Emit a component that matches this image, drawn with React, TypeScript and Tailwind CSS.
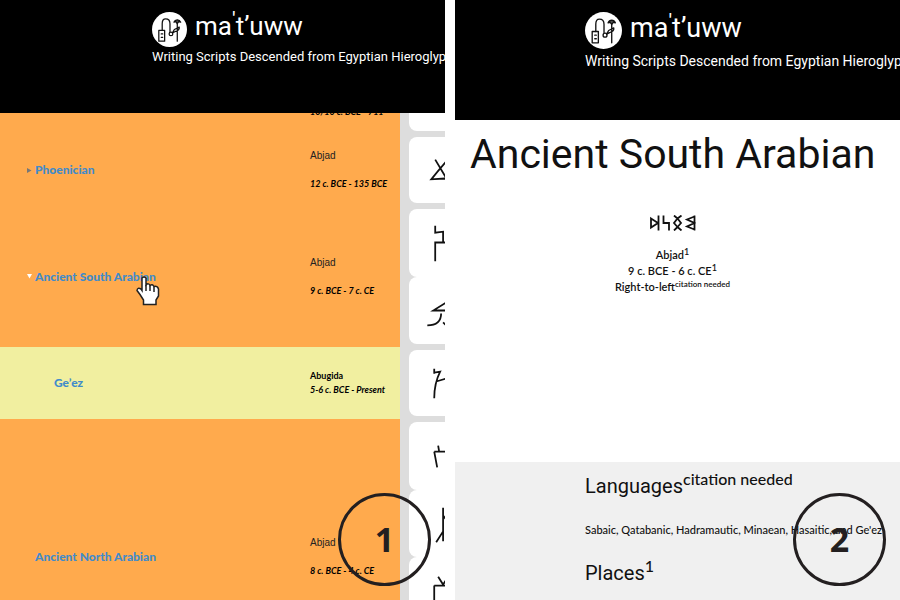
import React from "react";

type Script = {
  name: string;
  kind: string;
  dates: string;
  marker?: "closed" | "open";
  nested?: boolean;
  glyphs: string[];
  height: string;
};

const scripts: Script[] = [
  { name: "", kind: "", dates: "10/10 c. BCE - 711", glyphs: [""], height: "h-[72px]" },
  {
    name: "Phoenician",
    kind: "Abjad",
    dates: "12 c. BCE - 135 BCE",
    marker: "closed",
    glyphs: ["M26 23 L38 43 M37 25 Q29 34 22 43 L38 42"],
    height: "h-[72px]",
  },
  {
    name: "Ancient South Arabian",
    kind: "Abjad",
    dates: "9 c. BCE - 7 c. CE",
    marker: "open",
    glyphs: ["M26 17 V24 L34 23 V33 M26 34 H38 M26 33 V53", "M37 26 L24 34 L38 34 M32 37 Q32 49 18 49 M34 46 L38 50"],
    height: "h-[141px]",
  },
  {
    name: "Ge’ez",
    kind: "Abugida",
    dates: "5-6 c. BCE - Present",
    nested: true,
    glyphs: ["M25 19 V24 M25 23 L31 22 Q25 34 25 49 M27 32 L37 29"],
    height: "h-[72px]",
  },
  {
    name: "Ancient North Arabian",
    kind: "Abjad",
    dates: "8 c. BCE - 4 c. CE",
    glyphs: [
      "M29 24 L30 30 M25 30 H38 M25 30 L28 46",
      "M34 18 V52 M34 26 L38 31 M34 42 L27 53",
      "M29 20 L34 28 L38 22 M25 29 H38 M25 29 V50",
      "",
    ],
    height: "h-[276px]",
  },
];

function Logo({ className }: { className: string }) {
  return (
    <svg viewBox="0 0 36 36" className={className} role="img" aria-label="Logo">
      <circle cx="18" cy="18" r="18" fill="#fff" />
      <g fill="none" stroke="#111" strokeWidth="1.3" strokeLinecap="round" strokeLinejoin="round">
        <rect x="7" y="19" width="6" height="11" />
        <path d="M10.500 19 V12 Q10.500 7 14 7 Q18.500 7 18.500 12 V20" />
        <circle cx="19.500" cy="22.500" r="1.900" />
        <path d="M9.500 22.500 H11 M9.500 26 H11" />
        <path d="M21 21.500 L23 18 L28 15.500 Q28.500 19 24 20 L21 21.500 M26 11 V30" />
        <path d="M22.500 10.500 Q23.500 8 26 8 Q28.500 8 29.500 10.500 L27.500 10 L26 12 L24.500 10 Z" fill="#555" />
      </g>
    </svg>
  );
}

function Header({ large }: { large?: boolean }) {
  return (
    <header
      className={
        large
          ? "h-[120px] shrink-0 bg-black pt-3 pl-[130px] text-white"
          : "h-[113px] shrink-0 bg-black pt-3 pl-[152px] text-white"
      }
    >
      <div className="flex items-start gap-2">
        <Logo className={large ? "size-[37px] shrink-0" : "size-[35px] shrink-0"} />
        <p className={large ? "text-[27px] leading-8" : "text-[26px] leading-7"}>
          ma<sup className="-top-[9px] text-[21px] leading-none">'</sup>tʼuww
        </p>
      </div>
      <p
        className={
          large
            ? "mt-[2px] text-[14px] leading-5 whitespace-nowrap"
            : "text-[13px] leading-5 whitespace-nowrap"
        }
      >
        Writing Scripts Descended from Egyptian Hieroglyphs
      </p>
    </header>
  );
}

function Marker({ state }: { state: "closed" | "open" }) {
  return (
    <button
      type="button"
      aria-expanded={state === "open"}
      aria-label="Toggle descendants"
      className="block w-2 shrink-0"
    >
      <svg viewBox="0 0 5 5" className="size-[5px]">
        {state === "open" ? (
          <path d="M0 0 H5 L2.500 4.500 Z" fill="#fff" />
        ) : (
          <path d="M0 0 L4.500 2.500 L0 5 Z" fill="#777" />
        )}
      </svg>
    </button>
  );
}

function ScriptRow({ script }: { script: Script }) {
  return (
    <tr className={script.nested ? "bg-[#f1efa0]" : "bg-[#ffaa4d]"}>
      <td className={`p-0 align-middle ${script.height}`}>
        <div className={script.nested ? "flex items-center pl-[54px]" : "flex items-center pl-[27px]"}>
          {script.marker ? <Marker state={script.marker} /> : !script.nested && <span className="w-2" />}
          <a href="#" className="text-[12px] leading-4 font-black text-[#428bca]">
            {script.name}
          </a>
        </div>
      </td>
      <td className="p-0 align-middle text-[9px] leading-[14px] text-black">
        <div className={script.nested ? "" : "flex flex-col gap-[14px]"}>
          <p className={script.nested ? "h-[14px] font-bold" : "h-[14px] font-['Liberation_Sans',sans-serif] text-[10px] text-[#222]"}>
            {script.kind}
          </p>
          <p className="font-bold whitespace-nowrap italic">{script.dates}</p>
        </div>
      </td>
      <td className="h-px bg-[#ddd] p-0">
        <div className="flex h-full flex-col py-[3px] pl-[9px]">
          {script.glyphs.map((d, i) => (
            <div key={i} className="w-20 flex-1 rounded-lg bg-white">
              <svg viewBox="0 0 80 67" className="h-[66px] w-20">
                <path d={d} fill="none" stroke="#111" strokeWidth="1.800" />
              </svg>
            </div>
          ))}
        </div>
      </td>
    </tr>
  );
}

function StepBadge({ step }: { step: number }) {
  return (
    <div className="absolute right-[14px] bottom-[14px] flex size-[93px] items-center justify-center rounded-full border-[3px] border-[#231f20] font-['Open_Sans',sans-serif] text-[34px] font-bold text-[#231f20]">
      {step}
    </div>
  );
}

function HandCursor() {
  return (
    <svg
      viewBox="0 0 24 30"
      className="pointer-events-none absolute top-[276px] left-[136px] h-[30px] w-6"
      aria-hidden="true"
    >
      <path
        d="M6 2 Q8 0 10 2 V9 Q12.500 6.500 14 9.500 Q16.500 7.500 18 10.500 Q21.500 9.500 22.500 13 V20 L20 24 V28.500 H7.500 V24 L4 18.500 L1 14.500 Q1.500 11 5 13 L6 14.500 Z"
        fill="#fff"
        stroke="#222"
        strokeWidth="1.500"
      />
      <path d="M10 9 V15 M14 9.500 V15 M18 10.500 V16" stroke="#222" strokeWidth="1.500" />
    </svg>
  );
}

function Inscription() {
  return (
    <svg
      viewBox="0 0 46 16"
      className="h-4 w-[46px]"
      fill="none"
      stroke="#111"
      strokeWidth="1.800"
      role="img"
      aria-label="Musnad"
    >
      <path d="M1 3.500 L8 8 L1 12.500 Z M8.500 0.500 V15.500" />
      <path d="M13.500 0.500 V8 H19 V15.500" />
      <path d="M24 0.500 L27.500 3.500 L31.500 0.500 M27.500 3.500 L31 8 L27.500 12 L24 8 Z M24 15.500 L27.500 12 L31.500 15.500" />
      <path d="M44.500 0.500 V15.500 M44.500 1.500 L37 4.500 L44.500 8 L37 11.500 L44.500 14.500" />
    </svg>
  );
}

export default function App() {
  return (
    <main className="flex h-screen gap-[10px] overflow-hidden bg-white font-['Roboto',sans-serif]">
      <section className="relative flex min-w-0 flex-1 flex-col overflow-hidden">
        <Header />
        <div className="min-h-0 flex-1 overflow-hidden font-['Lato',sans-serif]">
          <table className="-mt-[51px] w-full table-fixed border-collapse">
            <colgroup>
              <col />
              <col className="w-[90px]" />
              <col className="w-[45px]" />
            </colgroup>
            <tbody>
              {scripts.map((s, i) => (
                <ScriptRow key={i} script={s} />
              ))}
            </tbody>
          </table>
        </div>
        <HandCursor />
        <StepBadge step={1} />
      </section>

      <section className="relative flex min-w-0 flex-1 flex-col overflow-hidden text-[#111]">
        <Header large />
        <h1 className="mt-[9px] pl-[15px] text-[41px] leading-[50px] whitespace-nowrap">Ancient South Arabian</h1>
        <div className="mt-9 flex flex-1 flex-col items-center pr-[10px] text-center font-['Lato',sans-serif] text-[11px] leading-4 font-semibold">
          <Inscription />
          <p className="mt-4">
            Abjad<sup className="text-[9px] leading-none">1</sup>
          </p>
          <p>
            9 c. BCE - 6 c. CE<sup className="text-[9px] leading-none">1</sup>
          </p>
          <p>
            Right-to-left<sup className="text-[8px] leading-none">citation needed</sup>
          </p>
        </div>
        <div className="h-[138px] shrink-0 bg-[#f0f0f0] pt-[10px] pl-[130px] whitespace-nowrap">
          <h2 className="text-[20px] leading-7">
            Languages
            <sup className="font-['Lato',sans-serif] text-[16px] leading-none font-medium">citation needed</sup>
          </h2>
          <p className="mt-[22px] font-['Lato',sans-serif] text-[11px] leading-4 font-medium">
            Sabaic, Qatabanic, Hadramautic, Minaean, Hasaitic, and Ge'ez
          </p>
          <h2 className="mt-[21px] text-[20px] leading-7">
            Places<sup className="font-['Lato',sans-serif] text-[16px] leading-none font-medium">1</sup>
          </h2>
        </div>
        <StepBadge step={2} />
      </section>
    </main>
  );
}
